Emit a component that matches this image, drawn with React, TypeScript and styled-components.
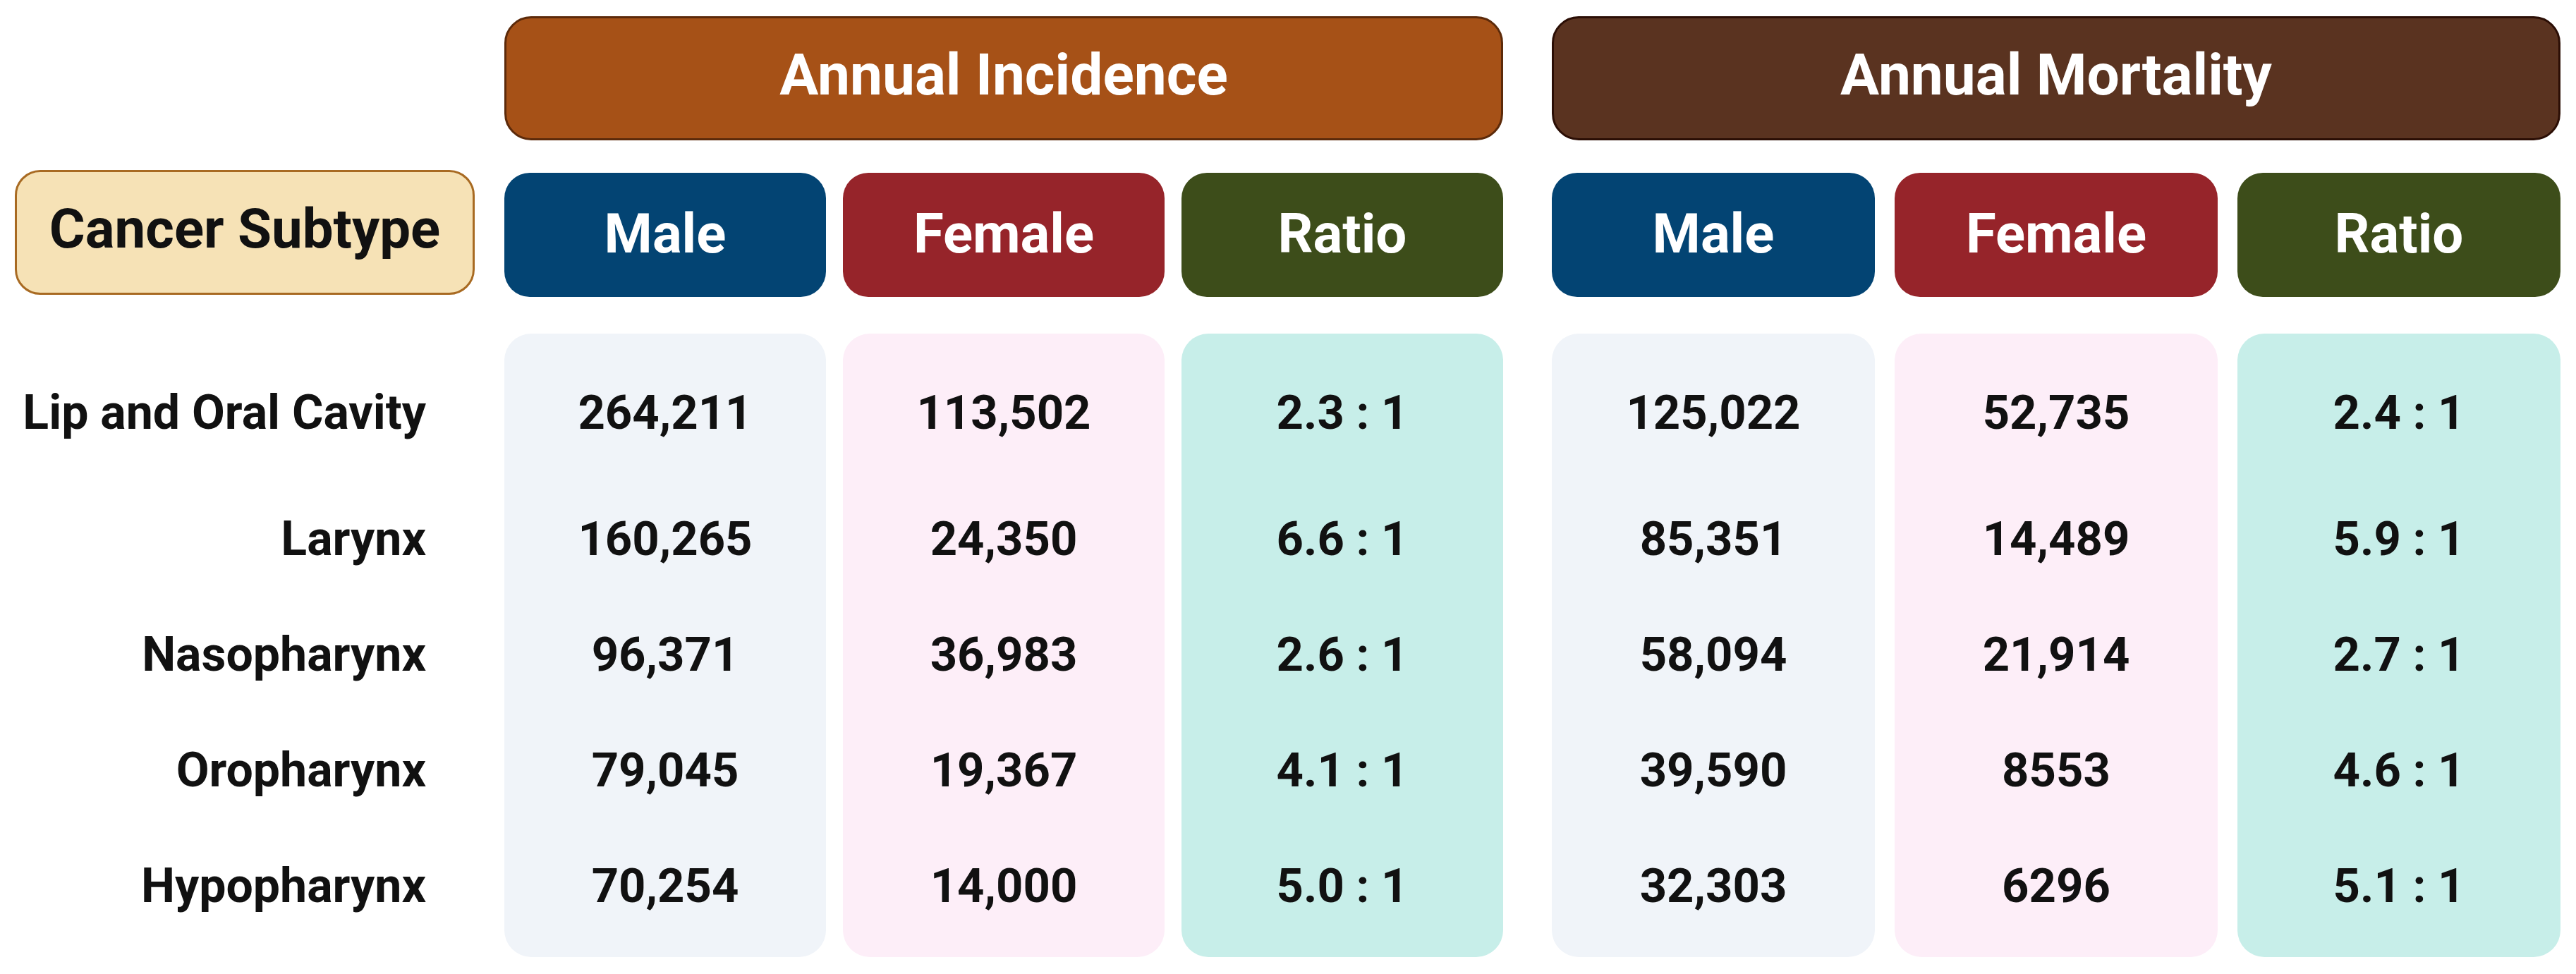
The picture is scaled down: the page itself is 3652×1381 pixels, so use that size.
import React from "react";
import styled, { createGlobalStyle } from "styled-components";

const GlobalStyle = createGlobalStyle`
  html, body {
    margin: 0;
    padding: 0;
    background: #ffffff;
  }
  body {
    font-family: Roboto, "Liberation Sans", Arial, sans-serif;
    color: #111111;
  }
`;

const Page = styled.div`
  display: flex;
  align-items: flex-start;
  padding: 23px 0 0 21px;
  width: 3652px;
  height: 1381px;
  box-sizing: border-box;
`;

const LabelColumn = styled.div`
  width: 652px;
  margin-right: 42px;
  display: flex;
  flex-direction: column;
  padding-top: 218px;
`;

const SubtypeBox = styled.div`
  height: 177px;
  box-sizing: border-box;
  border: 3px solid #a86a22;
  border-radius: 36px;
  background: #f6e2b6;
  display: flex;
  align-items: center;
  justify-content: center;
  padding-bottom: 10px;
  font-size: 78px;
  font-weight: 700;
  color: #111111;
`;

const RowList = styled.div<{ $align: "right" | "center" }>`
  display: flex;
  flex-direction: column;
  gap: 64px;
  padding-top: 62px;
  text-align: ${(p) => p.$align};
  & > :first-child {
    margin-bottom: 15px;
  }
`;

const LabelRows = styled(RowList)`
  margin-top: 55px;
  padding-right: 69px;
`;

const RowText = styled.div<{ $size?: number }>`
  height: 100px;
  line-height: 100px;
  font-size: ${(p) => p.$size ?? 67}px;
  font-weight: 700;
  color: #111111;
  white-space: nowrap;
`;

const Group = styled.div<{ $width: number; $gap: number; $after: number }>`
  width: ${(p) => p.$width}px;
  margin-right: ${(p) => p.$after}px;
  display: flex;
  flex-direction: column;
  --col-gap: ${(p) => p.$gap}px;
`;

const GroupHeader = styled.div<{ $bg: string; $border: string }>`
  height: 176px;
  box-sizing: border-box;
  border: 3px solid ${(p) => p.$border};
  border-radius: 38px;
  background: ${(p) => p.$bg};
  display: flex;
  align-items: center;
  justify-content: center;
  padding-bottom: 10px;
  font-size: 82px;
  font-weight: 700;
  color: #ffffff;
`;

const Columns = styled.div`
  margin-top: 46px;
  display: grid;
  grid-template-columns: repeat(3, 1fr);
  column-gap: var(--col-gap);
`;

const Column = styled.div`
  display: flex;
  flex-direction: column;
  gap: 52px;
`;

const SubHeader = styled.div<{ $bg: string }>`
  height: 176px;
  border-radius: 36px;
  background: ${(p) => p.$bg};
  display: flex;
  align-items: center;
  justify-content: center;
  padding-bottom: 3px;
  box-sizing: border-box;
  font-size: 78px;
  font-weight: 700;
  color: #ffffff;
`;

const DataCard = styled.div<{ $bg: string }>`
  height: 884px;
  box-sizing: border-box;
  border-radius: 38px;
  background: ${(p) => p.$bg};
`;

type Col = { title: string; head: string; card: string; values: string[] };

const MALE_HEAD = "#034473";
const FEMALE_HEAD = "#96242a";
const RATIO_HEAD = "#3d4d1a";
const MALE_CARD = "#f0f4f9";
const FEMALE_CARD = "#fdeef8";
const RATIO_CARD = "#c7eee9";

const labels = ["Lip and Oral Cavity", "Larynx", "Nasopharynx", "Oropharynx", "Hypopharynx"];

const groups: {
  title: string;
  bg: string;
  border: string;
  width: number;
  gap: number;
  after: number;
  cols: Col[];
}[] = [
  {
    title: "Annual Incidence",
    bg: "#a65117",
    border: "#5c2a0a",
    width: 1416,
    gap: 24,
    after: 69,
    cols: [
      { title: "Male", head: MALE_HEAD, card: MALE_CARD, values: ["264,211", "160,265", "96,371", "79,045", "70,254"] },
      { title: "Female", head: FEMALE_HEAD, card: FEMALE_CARD, values: ["113,502", "24,350", "36,983", "19,367", "14,000"] },
      { title: "Ratio", head: RATIO_HEAD, card: RATIO_CARD, values: ["2.3 : 1", "6.6 : 1", "2.6 : 1", "4.1 : 1", "5.0 : 1"] },
    ],
  },
  {
    title: "Annual Mortality",
    bg: "#5a3320",
    border: "#2b0e05",
    width: 1430,
    gap: 28,
    after: 0,
    cols: [
      { title: "Male", head: MALE_HEAD, card: MALE_CARD, values: ["125,022", "85,351", "58,094", "39,590", "32,303"] },
      { title: "Female", head: FEMALE_HEAD, card: FEMALE_CARD, values: ["52,735", "14,489", "21,914", "8553", "6296"] },
      { title: "Ratio", head: RATIO_HEAD, card: RATIO_CARD, values: ["2.4 : 1", "5.9 : 1", "2.7 : 1", "4.6 : 1", "5.1 : 1"] },
    ],
  },
];

export default function App() {
  return (
    <>
      <GlobalStyle />
      <Page>
        <LabelColumn>
          <SubtypeBox>Cancer Subtype</SubtypeBox>
          <LabelRows $align="right">
            {labels.map((l) => (
              <RowText key={l} $size={68}>
                {l}
              </RowText>
            ))}
          </LabelRows>
        </LabelColumn>
        {groups.map((g) => (
          <Group key={g.title} $width={g.width} $gap={g.gap} $after={g.after}>
            <GroupHeader $bg={g.bg} $border={g.border}>
              {g.title}
            </GroupHeader>
            <Columns>
              {g.cols.map((c) => (
                <Column key={c.title}>
                  <SubHeader $bg={c.head}>{c.title}</SubHeader>
                  <DataCard $bg={c.card}>
                    <RowList $align="center">
                      {c.values.map((v, i) => (
                        <RowText key={i}>{v}</RowText>
                      ))}
                    </RowList>
                  </DataCard>
                </Column>
              ))}
            </Columns>
          </Group>
        ))}
      </Page>
    </>
  );
}
